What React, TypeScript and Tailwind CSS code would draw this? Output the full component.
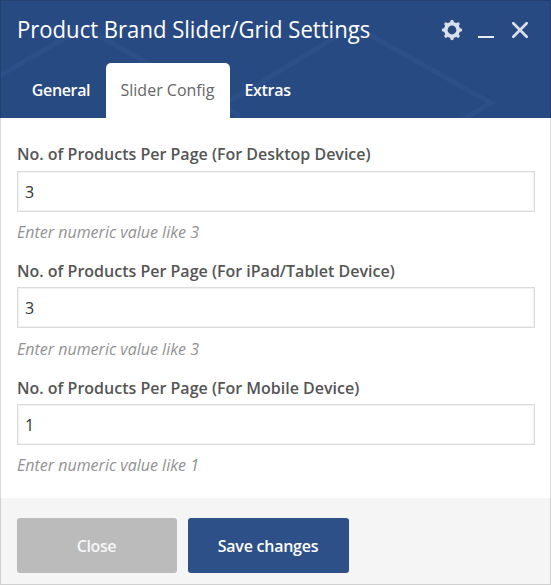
import React from "react";

const fields = [
  { id: "desktop", label: "No. of Products Per Page (For Desktop Device)", value: "3", hint: "Enter numeric value like 3" },
  { id: "tablet", label: "No. of Products Per Page (For iPad/Tablet Device)", value: "3", hint: "Enter numeric value like 3" },
  { id: "mobile", label: "No. of Products Per Page (For Mobile Device)", value: "1", hint: "Enter numeric value like 1" },
];

function GearIcon() {
  return (
    <svg width="22" height="22" viewBox="-11 -11 22 22" fill="none" stroke="currentColor">
      <circle r="6.2" strokeWidth="3.6" />
      {[0, 45, 90, 135, 180, 225, 270, 315].map((angle) => (
        <path key={angle} d="M0-7V-8.5" strokeWidth="3.4" strokeLinecap="round" transform={`rotate(${angle})`} />
      ))}
    </svg>
  );
}

function CloseIcon() {
  return (
    <svg width="18" height="18" viewBox="0 0 18 18" fill="none" stroke="currentColor" strokeWidth="2.7" strokeLinecap="round">
      <path d="M2.3 2.3 15.7 15.7M15.7 2.3 2.3 15.7" />
    </svg>
  );
}

function HeaderPattern() {
  return (
    <svg className="absolute inset-0" width="551" height="118" fill="none" stroke="#2d4f89" strokeWidth="5">
      <path d="M-4 78 84 27 240 116M230 101 354 26 491 103 462 120" />
    </svg>
  );
}

export default function App() {
  return (
    <div className="relative flex h-[585px] w-[551px] flex-col overflow-hidden bg-white font-['Open_Sans',sans-serif]">
      <header className="relative flex h-[118px] shrink-0 flex-col justify-between bg-[#284a82]">
        <HeaderPattern />
        <div className="relative flex h-[60px] items-center justify-between pr-[22px] pl-[17px]">
          <h1 className="mb-[2px] w-[353px] origin-left scale-x-[0.92] text-[24px] leading-[30px] whitespace-nowrap text-white">
            Product Brand Slider/Grid Settings
          </h1>
          <div className="flex items-center text-[#d9e0eb]">
            <button aria-label="Settings"><GearIcon /></button>
            <button aria-label="Minimize" className="mt-[14px] ml-[15px] h-[2px] w-4 bg-[#e9edf3]" />
            <button aria-label="Close" className="ml-[17px]"><CloseIcon /></button>
          </div>
        </div>
        <nav className="relative flex h-[55px] pl-[17px] text-[16px] leading-[55px] text-white">
          <button className="w-[89px] pr-px font-semibold tracking-[-0.35px]">General</button>
          <button className="w-[124px] rounded-t-[5px] bg-white pr-px text-[#666]">Slider Config</button>
          <button className="w-[75px] font-semibold tracking-[-0.3px]">Extras</button>
        </nav>
      </header>

      <main className="h-[380px] shrink-0 px-[17px] pt-[25.2px]">
        {fields.map((field) => (
          <div key={field.id} className="h-[116.7px]">
            <label htmlFor={field.id} className="block h-[27.5px] text-[16px] leading-[23px] font-semibold whitespace-nowrap text-[#555]">
              {field.label}
            </label>
            <input
              id={field.id}
              defaultValue={field.value}
              className="block h-[41px] w-[518px] border border-[#dcdcdc] bg-white px-[7px] pt-px text-[16px] text-[#333] shadow-[inset_0_0_1px_1px_rgba(0,0,0,0.06)] outline-none"
            />
            <p className="mt-[9.3px] text-[16px] leading-[23px] text-[#929292] italic">{field.hint}</p>
          </div>
        ))}
      </main>

      <footer className="flex flex-1 gap-[11px] bg-[#f5f5f5] pt-5 pl-[17px] text-[16px] text-white">
        <button className="h-[55px] w-40 rounded-[3px] bg-[#bbb] pr-px font-semibold tracking-[-0.4px] text-[#f6f6f6]">Close</button>
        <button className="h-[55px] w-[161px] rounded-[3px] bg-[#2d5089] pr-px font-semibold tracking-[-0.25px]">Save changes</button>
      </footer>
      <div className="pointer-events-none absolute inset-0 border border-black/15" />
    </div>
  );
}
